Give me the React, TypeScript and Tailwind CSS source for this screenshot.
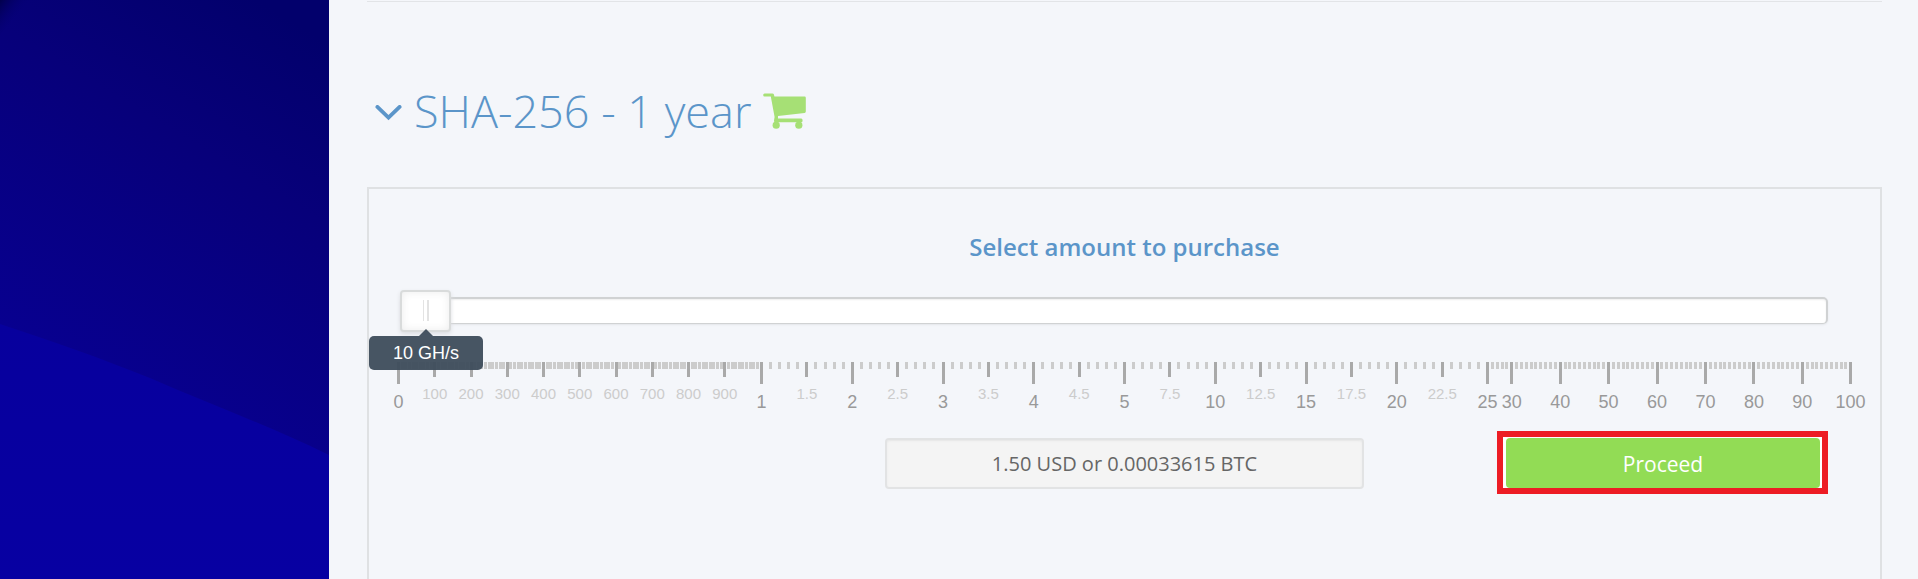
import { useMemo, useState } from "react";

type Tick = {
	size: "small" | "medium" | "large";
	label?: string;
};

type Segment = {
	from: number;
	to: number;
	ticks: Tick[];
};

const USD_PER_GH = 0.15;
const BTC_PER_GH = 0.000033615;

// Every segment covers a quarter of the ruler, bounds are in TH/s
const SEGMENTS: Segment[] = [
	buildSegment(0, 1, 100, 100, 10, (value) => String(Math.round(value * 1000))),
	buildSegment(1, 5, 40, 10, 5, (value) => String(value)),
	buildSegment(5, 25, 40, 10, 5, (value) => String(value)),
	buildSegment(25, 100, 75, 10, 0, (value) => String(value), 5),
];

function buildSegment(
	from: number,
	to: number,
	cells: number,
	major: number,
	medium: number,
	format: (value: number) => string,
	offset = 0,
): Segment {
	const ticks = Array.from({ length: cells }, (_, index): Tick => {
		const value = from + ((to - from) * index) / cells;
		if (index === 0 || (index + offset) % major === 0) return { size: "large", label: String(value) };
		if (medium && index % medium === 0) return { size: "medium", label: format(value) };
		return { size: "small" };
	});
	return { from, to, ticks };
}

function positionToGh(position: number) {
	const index = Math.min(3, Math.floor(position / 250));
	const { from, to } = SEGMENTS[index];
	const th = from + ((to - from) * (position - index * 250)) / 250;
	return Math.max(10, Math.round(th * 100) * 10);
}

function RulerTick({ size, label }: Tick) {
	if (size === "small") return <span className="block h-[7px] w-[3px] bg-[#ccc]" />;
	const large = size === "large";
	return (
		<span className="flex w-[3px] flex-col items-center">
			<span className={large ? "h-[22px] w-[3px] bg-[#a9a9a9]" : "h-[15px] w-[3px] bg-[#a9a9a9]"} />
			<span className={large ? "mt-2 text-[18px] leading-5 text-[#999]" : "mt-[7px] text-[15px] leading-5 text-[#ccc]"}>{label}</span>
		</span>
	);
}

function Ruler() {
	return (
		<div className="mt-[31px] mr-7 ml-7 flex h-[50px] font-['Liberation_Sans',Arial,sans-serif]" aria-hidden="true">
			{SEGMENTS.map((segment) => (
				<div key={segment.from} className="flex min-w-0 flex-1">
					{segment.ticks.map((tick, index) => (
						<div key={index} className="w-0 flex-1">
							<RulerTick {...tick} />
						</div>
					))}
				</div>
			))}
			<div className="w-[3px]">
				<RulerTick size="large" label="100" />
			</div>
		</div>
	);
}

function SideArt() {
	return (
		<svg className="h-full w-full" viewBox="0 0 329 579" preserveAspectRatio="none" aria-hidden="true">
			<defs>
				<linearGradient id="upper" gradientUnits="userSpaceOnUse" x1="290" y1="20" x2="60" y2="400">
					<stop offset="0" stopColor="#02006c" />
					<stop offset="0.35" stopColor="#07007a" />
					<stop offset="1" stopColor="#080092" />
				</linearGradient>
				<linearGradient id="lower" x1="0" y1="0" x2="0" y2="1">
					<stop offset="0" stopColor="#07009d" />
					<stop offset="1" stopColor="#0700a2" />
				</linearGradient>
				<linearGradient id="corner" gradientUnits="userSpaceOnUse" x1="0" y1="0" x2="20" y2="15">
					<stop offset="0" stopColor="#01004c" />
					<stop offset="1" stopColor="#05007a" stopOpacity="0" />
				</linearGradient>
			</defs>
			<rect width="329" height="579" fill="url(#upper)" />
			<path d="M0 0H30L0 35Z" fill="url(#corner)" />
			<path d="M0 324C55 342 100 358 150 378C205 402 265 424 329 455V579H0Z" fill="url(#lower)" />
		</svg>
	);
}

function CartIcon() {
	return (
		<svg className="h-9 w-[43px]" viewBox="0 0 43 36" fill="#a6e075" aria-hidden="true">
			<path d="M1.6 .4H9.4Q10.6 .4 10.9 1.6L11.4 3.6H41.6Q42.8 3.6 42.8 4.8V18.4Q42.8 19.7 41.6 19.9L15 23V25.6H38.2Q39.6 25.6 39.6 27.4T38.2 29.3H12.6Q10.8 29.3 11 27.4L11.6 24L7.8 3.6H1.6Q.2 3.6 .2 2T1.6 .4Z" />
			<circle cx="13.2" cy="32.2" r="3.6" />
			<circle cx="35.8" cy="32.2" r="3.6" />
		</svg>
	);
}

export default function App() {
	const [position, setPosition] = useState(0);

	const gh = useMemo(() => positionToGh(position), [position]);
	const price = `${(gh * USD_PER_GH).toFixed(2)} USD or ${(gh * BTC_PER_GH).toFixed(8)} BTC`;
	const ratio = position / 1000;

	return (
		<div className="flex h-screen overflow-hidden bg-[#f4f6fa] font-['Open_Sans',sans-serif]">
			<aside className="w-[329px] shrink-0">
				<SideArt />
			</aside>

			<main className="flex min-w-0 flex-1 flex-col pt-px pr-9 pl-[38px]">
				<hr className="border-t border-[#e2e4e7]" />

				<h2 className="mt-[79px] mb-[46px] flex items-center pl-2 text-[45px] leading-[60px] font-light text-[#5b95c9]">
					<svg className="mt-1 mr-3 h-4 w-[27px]" viewBox="0 0 27 16" fill="none" stroke="currentColor" strokeWidth="3.8" strokeLinecap="round" aria-hidden="true">
						<path d="M2.4 1.9L13.5 12.6L24.6 1.9" />
					</svg>
					<span className="mr-3">SHA-256 - 1 year</span>
					<CartIcon />
				</h2>

				<section className="flex-1 border-x-2 border-t-2 border-[#dfe1e3] pt-[42px]">
					<label htmlFor="amount" className="block text-center text-2xl leading-8 font-semibold text-[#5b95c9]">
						Select amount to purchase
					</label>

					<div className="relative z-10 mt-[26px] mr-[52px] ml-[31px] h-[42px]">
						<input
							id="amount"
							type="range"
							min={0}
							max={1000}
							value={position}
							onChange={(event) => setPosition(Number(event.target.value))}
							className="block h-[42px] w-full appearance-none bg-transparent [&::-webkit-slider-runnable-track]:h-[27px] [&::-webkit-slider-runnable-track]:rounded-[5px] [&::-webkit-slider-runnable-track]:border-2 [&::-webkit-slider-runnable-track]:border-b [&::-webkit-slider-runnable-track]:border-[#d0d2d3] [&::-webkit-slider-runnable-track]:bg-white [&::-webkit-slider-runnable-track]:shadow-[inset_0_1px_2px_#eee,0_1px_2px_#e4e6ea] [&::-webkit-slider-thumb]:-mt-[9px] [&::-webkit-slider-thumb]:-ml-[2px] [&::-webkit-slider-thumb]:h-[42px] [&::-webkit-slider-thumb]:w-[51px] [&::-webkit-slider-thumb]:appearance-none [&::-webkit-slider-thumb]:rounded-[4px] [&::-webkit-slider-thumb]:border-2 [&::-webkit-slider-thumb]:border-[#d9dbdb] [&::-webkit-slider-thumb]:bg-white [&::-webkit-slider-thumb]:bg-[linear-gradient(#e3e3e3,#e3e3e3),linear-gradient(#e3e3e3,#e3e3e3)] [&::-webkit-slider-thumb]:bg-[length:1px_21px,2px_21px] [&::-webkit-slider-thumb]:bg-[position:21px_8px,25px_8px] [&::-webkit-slider-thumb]:bg-no-repeat [&::-webkit-slider-thumb]:shadow-[inset_0_0_8px_#ececec,0_2px_4px_#dcdee2]"
						/>
						<output
							htmlFor="amount"
							className="absolute top-[47px] flex h-[34px] w-[114px] -translate-x-1/2 items-center justify-center rounded-[5px] bg-[#3d4c5b]/95 font-['Liberation_Sans',Arial,sans-serif] text-[18px] leading-5 text-white"
							style={{ left: `calc(${ratio * 100}% + ${Math.round(26 - ratio * 52)}px)` }}
						>
							<span className="absolute bottom-full border-x-[7px] border-b-[7px] border-x-transparent border-b-[#3d4c5b]/95" />
							{gh} GH/s
						</output>
					</div>

					<Ruler />

					<div className="mt-[19px] grid grid-cols-[1fr_479px_1fr] items-start">
						<input
							type="text"
							readOnly
							aria-label="Price"
							value={price}
							className="col-start-2 mt-[7px] h-[51px] w-full rounded-[4px] border-2 border-[#e2e3e4] bg-[#f4f4f4] text-center text-[20px] leading-7 text-[#666] shadow-[inset_0_1px_2px_#e6e6e6]"
						/>
						<div className="mr-[52px] ml-auto w-[331px] border-6 border-[#ed1c24] bg-white pt-px pr-0.5 pl-[3px]">
							<button type="button" className="block h-[50px] w-full rounded-[4px] bg-[#92dc55] pt-0.5 text-[21px] leading-7 text-white">
								Proceed
							</button>
						</div>
					</div>
				</section>
			</main>
		</div>
	);
}
